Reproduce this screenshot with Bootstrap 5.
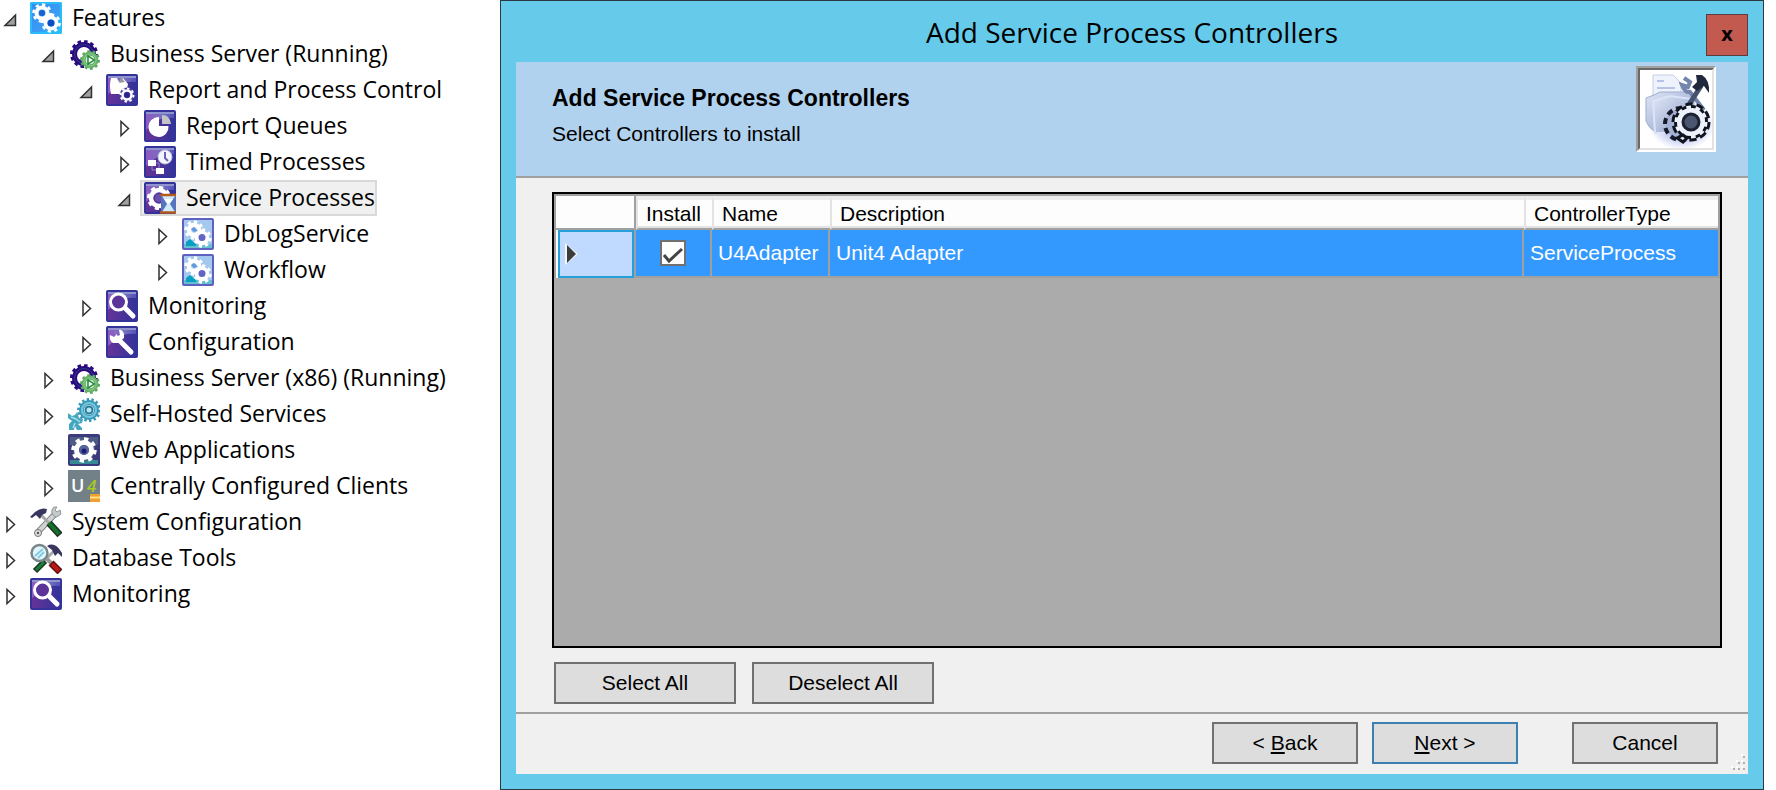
<!DOCTYPE html>
<html lang="en">
<head>
<meta charset="utf-8">
<meta name="viewport" content="width=device-width, initial-scale=1">
<title>Add Service Process Controllers</title>
<link href="https://cdn.jsdelivr.net/npm/bootstrap@5.3.0/dist/css/bootstrap.min.css" rel="stylesheet">
<style>
  body { background: #fff; color: #000; font-family: "Liberation Sans", Arial, sans-serif; font-size: 21px; line-height: 24px; }

  /* feature tree */
  .tree { flex: 0 0 500px; font-family: "Open Sans", "Segoe UI", sans-serif; font-size: 23px; }
  .tree ul ul { padding-left: 38px; }
  .tree-row { height: 36px; }
  .twisty { width: 26px; height: 36px; padding: 0; border: 0; background: none; }
  .twisty svg { display: block; width: 26px; height: 36px; }
  .tree-link { height: 36px; padding: 0 0 0 2px; gap: 10px; border: 2px solid transparent; color: #000; text-decoration: none; white-space: nowrap; }
  .tree-link svg { width: 32px; height: 32px; flex: none; }
  .tree-link span { padding-bottom: 2px; }
  .tree-link.selected { background: #f0f0f0; border-color: #d9d9d9; }

  /* wizard window */
  .wizard { background: #66cbea; border: 1px solid #2b3a42; padding: 0 15px 15px; margin-right: 12px; }
  .title-bar { height: 61px; font-family: "Open Sans", "Segoe UI", sans-serif; font-size: 28px; line-height: 36px; }
  .close-btn { right: 0; top: 13px; width: 42px; height: 42px; padding: 0 0 2px; border: 1px solid #5b3c40; background: #c25a50; color: #000; font: bold 20px/24px "Open Sans", sans-serif; }
  .banner { background: #b1d2ee; border-bottom: 2px solid #a0a0a0; height: 116px; padding: 4px 32px 0 36px; }
  .banner h1 { font-size: 23px; line-height: 36px; font-weight: bold; }
  .banner p { line-height: 36px; }
  .banner-copy { padding-top: 14px; }
  .banner-pic { width: 80px; height: 86px; border: 2px solid; border-color: #a0a0a0 #fff #fff #a0a0a0; }
  .banner-pic svg { display: block; width: 76px; height: 82px; background: #fff; border: 2px solid; border-color: #696969 #e3e3e3 #e3e3e3 #696969; }
  .pane { background: #f0f0f0; }
  .pane-main { padding: 14px 26px 8px 36px; }
  .grid-box { border: 2px solid #000; background: #ababab; }
  .grid-table { width: 100%; table-layout: fixed; border-collapse: separate; border-spacing: 0; border: 2px solid #a0a0a0; border-bottom: 0; }
  .grid-table th { height: 34px; padding: 0 8px; font-weight: normal; background: #fdfdfd; border: 2px solid #e3e3e3; border-top: 4px solid #ececec; border-right: 0; border-bottom: 2px solid #a0a0a0; box-shadow: inset 0 -2px #e3e3e3; }
  .grid-table th.corner { border: 0; border-right: 2px solid #a0a0a0; border-bottom: 2px solid #a0a0a0; box-shadow: none; }
  .grid-table td { height: 48px; padding: 0 6px; background: #39f; color: #fff; white-space: nowrap; border-right: 2px solid #a0a0a0; border-bottom: 2px solid #a0a0a0; }
  .grid-table td:last-child { border-right: 0; }
  .grid-table td.row-head { padding: 0 0 0 2px; background: #fff; border-bottom: 0; }
  .row-mark { height: 48px; background: #bfd9ff; border: 2px solid #26a0da; padding-left: 4px; }
  .col-mark { width: 80px; } .col-install { width: 76px; } .col-name { width: 118px; } .col-type { width: 194px; }
  .tick { appearance: none; display: block; width: 26px; height: 26px; margin: 0 auto; border: 2px solid #707070; background: #fff; }
  .tick:checked { background: #fff url("data:image/svg+xml,%3Csvg xmlns='http://www.w3.org/2000/svg' viewBox='0 0 22 22'%3E%3Cpath d='M2 13l5 6L20 7' fill='none' stroke='%23444' stroke-width='3'/%3E%3C/svg%3E"); }
  .picks { padding: 14px 0 0 2px; }
  .win-btn { height: 42px; padding: 0; border: 2px solid #707070; background: #ddd; color: #000; }
  .win-btn.default { border-color: #3c7fb1; }
  .w-pick { width: 182px; } .w-nav { width: 146px; }
  .pane-foot { border-top: 2px solid #a0a0a0; padding: 8px 30px 10px; }
  .gap-nav { gap: 14px; }
  .cancel-gap { margin-left: 40px; }
  .grip { right: 3px; bottom: 3px; width: 15px; height: 17px; }
</style>
</head>
<body>
<svg class="position-absolute" width="0" height="0" aria-hidden="true">
  <defs>
    <linearGradient id="g-violet" x1="0" y1="0" x2="1" y2="0"><stop offset="0" stop-color="#663399"/><stop offset=".55" stop-color="#4a3399"/><stop offset="1" stop-color="#333399"/></linearGradient>
    <linearGradient id="g-shine" x1="0" y1="0" x2="1" y2="0"><stop offset="0" stop-color="#9a63cc"/><stop offset=".6" stop-color="#8080c8"/><stop offset="1" stop-color="#5a5ac0"/></linearGradient>
    <linearGradient id="g-blue" x1="0" y1="0" x2="1" y2="1"><stop offset="0" stop-color="#2f8df0"/><stop offset=".6" stop-color="#3c9cf4"/><stop offset="1" stop-color="#20c8fa"/></linearGradient>
    <linearGradient id="g-folder" x1="0" y1="0" x2="1" y2="1"><stop offset="0" stop-color="#dfe6f6"/><stop offset="1" stop-color="#8c9cc6"/></linearGradient>
    <radialGradient id="g-glow"><stop offset=".5" stop-color="#a9b6ec"/><stop offset="1" stop-color="#fff"/></radialGradient>
  </defs>
  <symbol id="open" viewBox="0 0 26 36"><path d="M5 25.500H15.500V15z" fill="#a0a0a0" stroke="#303030" stroke-width="1.500"/></symbol>
  <symbol id="shut" viewBox="0 0 26 36"><path d="M7 13.500v14l7.500-7z" fill="#fff" stroke="#303030" stroke-width="1.500"/></symbol>
  <symbol id="tile" viewBox="0 0 32 32"><rect width="32" height="32" rx="2" fill="#333399"/><rect x="2" y="2" width="28" height="28" fill="url(#g-violet)"/><path d="M2 2h28v6Q18 7 12 12T2 20z" fill="url(#g-shine)" opacity=".8"/><path d="M2 3h28" stroke="#8f94cf" stroke-width="2"/></symbol>
  <symbol id="features" viewBox="0 0 32 32"><rect width="32" height="32" rx="2" fill="url(#g-blue)"/><rect x="1" y="1" width="30" height="30" rx="1" fill="none" stroke="#28bcf8" stroke-width="2"/>
    <g fill="none" stroke="#fff"><circle cx="12" cy="11" r="5.500" stroke-width="4"/><circle cx="12" cy="11" r="8.500" stroke-width="2.500" pathLength="16" stroke-dasharray="1 1"/><circle cx="21" cy="21" r="5.500" stroke-width="4"/><circle cx="21" cy="21" r="8.500" stroke-width="2.500" pathLength="16" stroke-dasharray="1 1"/></g><circle cx="12" cy="11" r="3" fill="#1b62cc"/><circle cx="21" cy="21" r="3.500" fill="#0a4fc4"/></symbol>
  <symbol id="server" viewBox="0 0 32 32"><g fill="none" stroke="#2a0a80"><circle cx="16" cy="16" r="9.500" stroke-width="5"/><circle cx="16" cy="16" r="12.500" stroke-width="3" pathLength="24" stroke-dasharray="1.100 .9"/></g><circle cx="16" cy="16" r="9.500" fill="none" stroke="#2c4080" stroke-width="1"/><circle cx="22" cy="22" r="7.500" fill="#8fcb92" stroke="#68b26c" stroke-width="2"/><circle cx="22" cy="22" r="9" fill="none" stroke="#5aa860" stroke-width="2" pathLength="20" stroke-dasharray="1 1"/><circle cx="22" cy="22" r="5" fill="#d6efd2" stroke="#4e9e58"/><path d="M20 18v8l6-4z" fill="#fff" stroke="#1c8a35" stroke-width="1.500"/></symbol>
  <symbol id="report" viewBox="0 0 32 32"><use href="#tile"/><path d="M5 4h6l2 4 4-4 5 6-2 9-4 1H5q-2-8 0-16z" fill="#fff"/><path d="M15 3l-2 6 6-1z" fill="#999"/><circle cx="21" cy="21" r="7.500" fill="#4a3aa0"/><g fill="none" stroke="#fff"><circle cx="21" cy="21" r="4.500" stroke-width="2.500"/><circle cx="21" cy="21" r="6.500" stroke-width="2" pathLength="16" stroke-dasharray="1 1"/></g><circle cx="21" cy="21" r="2.500" fill="#25258c"/></symbol>
  <symbol id="pie" viewBox="0 0 32 32"><use href="#tile"/><path d="M15 7v9h9.500A10 10 0 1 1 15 7z" fill="#fff"/><path d="M18 5q8 0 9 9h-9z" fill="#c4c4c8"/></symbol>
  <symbol id="timed" viewBox="0 0 32 32"><use href="#tile"/><circle cx="21" cy="11" r="7" fill="#f4f4ff" stroke="#c0c0e0"/><path d="M21 6v6l3 3" fill="none" stroke="#6a62b8" stroke-width="2"/><path d="M4 14h8v6H4z" fill="#fff"/><path d="M8 20v4h4M12 17h3v5" fill="none" stroke="#9a80cc"/><path d="M12 22h8v6h-8z" fill="#fff"/></symbol>
  <symbol id="service" viewBox="0 0 32 32"><use href="#tile"/><g fill="none" stroke="#fff"><circle cx="15" cy="16" r="8" stroke-width="4.500"/><circle cx="15" cy="16" r="10.800" stroke-width="2.500" pathLength="16" stroke-dasharray="1 1"/></g><circle cx="15" cy="16" r="4" fill="#6a4fb0"/><path d="M17 13h15v18H17z" fill="#5873bd"/><path d="M18 14h13l-5 8 5 8H18l5-8z" fill="#cfeafa"/><path d="M20 17h9l-5 5z" fill="#fff"/><path d="M16 13h16M16 30.500h16" stroke="#b35a1c" stroke-width="2.500"/></symbol>
  <symbol id="gears" viewBox="0 0 32 32"><rect x="1" y="1" width="30" height="30" rx="1" fill="#a5c8ee" stroke="#6060c0" stroke-width="2"/><path d="M2 26h28v4H2z" fill="#65bfd0"/><g fill="none" stroke="#fff"><circle cx="12" cy="12" r="5" stroke-width="4.500"/><circle cx="12" cy="12" r="8.200" stroke-width="3" pathLength="16" stroke-dasharray="1 1"/><circle cx="20" cy="20" r="5" stroke-width="4.500"/><circle cx="20" cy="20" r="8.200" stroke-width="3" pathLength="16" stroke-dasharray="1 1"/></g><path d="M9 11l3-2 4 4-4 1z" fill="#6199dc"/><circle cx="20" cy="19.500" r="3.500" fill="#6464c4"/><path d="M4 28v-4l4-3 6 5v2z" fill="#06a0c0"/></symbol>
  <symbol id="lens" viewBox="0 0 32 32"><use href="#tile"/><path d="M19 18l8 8" stroke="#fff" stroke-width="5" stroke-linecap="round"/><circle cx="12.500" cy="12" r="8" fill="#5c3399" stroke="#fff" stroke-width="3"/></symbol>
  <symbol id="wrench" viewBox="0 0 32 32"><use href="#tile"/><path d="M13 14l12 12" stroke="#fff" stroke-width="5" stroke-linecap="round"/><path d="M9 4l1 5-2 2-4-2q-1 6 3 8h5l6-5V8q-2-5-5-4l1 5-2 1-2-2z" fill="#fff"/></symbol>
  <symbol id="hosted" viewBox="0 0 32 32"><g fill="none" stroke="#3a98b8"><circle cx="21" cy="12" r="7.500" stroke-width="5"/><circle cx="21" cy="12" r="10.500" stroke-width="3" pathLength="28" stroke-dasharray="1 1"/></g><circle cx="21" cy="12" r="7" fill="none" stroke="#74c8dc" stroke-width="2"/><circle cx="21" cy="12" r="3.500" fill="#b6e6f2" stroke="#267898" stroke-width="2"/><path d="M0 15l4 3 3-1 2-3 2 6 4 1-1 4-4 1 4 4v2h-5l-2-4-1 4H1v-6l3-3-4-3z" fill="#45a6c0"/><path d="M3 19l5 2 4 3M5 30l2-5" fill="none" stroke="#a5dfe8" stroke-width="1.500"/></symbol>
  <symbol id="web" viewBox="0 0 32 32"><rect width="32" height="32" rx="2" fill="#3a3a7c"/><path d="M2 3h28v8H2z" fill="#4c5c82"/><path d="M2 26h28v4H2z" fill="#368a94"/><circle cx="16" cy="16" r="11" fill="#52638c"/><g fill="none" stroke="#fff"><circle cx="16" cy="16" r="7.500" stroke-width="5"/><circle cx="16" cy="16" r="11" stroke-width="3.500" pathLength="16" stroke-dasharray="1 1"/></g><circle cx="16" cy="16" r="5" fill="#54669c"/><circle cx="16" cy="17" r="2.500" fill="#201e78"/></symbol>
  <symbol id="u4" viewBox="0 0 32 32"><rect width="32" height="32" fill="#728087"/><text x="3" y="22" font-family="Open Sans, sans-serif" font-size="18" font-weight="600" fill="#fff">U</text><text x="19" y="22" font-family="Open Sans, sans-serif" font-size="17" font-weight="600" font-style="italic" fill="#a9c926">4</text><path d="M22 24h10v8H22z" fill="#f0a030"/><path d="M22 27.500h10" stroke="#ffdf7c" stroke-width="2"/></symbol>
  <symbol id="hammer" viewBox="0 0 32 32"><path d="M7 27L26 7" stroke="#777" stroke-width="6"/><path d="M7 27L26 7" stroke="#d0d3d3" stroke-width="4"/><path d="M24 1q-4 4-1 8t8-1l-1-4-3 2-2-2 2-3z" fill="#c4caca" stroke="#92999b"/><circle cx="8" cy="27" r="3.500" fill="#ddd" stroke="#777"/><circle cx="8" cy="27" r="1.200" fill="#555"/><path d="M11 9l9 9" stroke="#a8a8a8" stroke-width="3"/><path d="M19 17l11 12" stroke="#252e28" stroke-width="7"/><path d="M19 17l10 11" stroke="#117328" stroke-width="4"/><path d="M0 11l5-5q6-5 12-3l-1 4-4 2-2 4-4-4-4 3z" fill="#38365e"/></symbol>
  <symbol id="dbtools" viewBox="0 0 32 32"><path d="M13 20L25 8" stroke="#aaa" stroke-width="3"/><path d="M5 29l10-10" stroke="#1e3524" stroke-width="6"/><path d="M6 28l8-8" stroke="#158034" stroke-width="3"/><path d="M17 17l6 6" stroke="#999" stroke-width="4"/><path d="M21 21l9 9" stroke="#601111" stroke-width="7"/><path d="M22 22l7 7" stroke="#bb1717" stroke-width="4"/><circle cx="9.500" cy="11" r="8" fill="#dff6fc" stroke="#78858a" stroke-width="2.500"/><path d="M5 14l8-7M8 16l6-6" stroke="#82cbe2" stroke-width="2"/><path d="M17 4q8-5 15 7v4l-4-4-3 3-3-6z" fill="#38365e"/></symbol>
  <symbol id="setup" viewBox="0 0 72 78"><ellipse cx="42" cy="55" rx="33" ry="25" fill="url(#g-glow)" opacity=".8"/><path d="M13 5h20l8 8v22H13z" fill="#eef2fc" stroke="#c4cee6"/><path d="M17 11h7M17 18h18M17 24h20" stroke="#b7c3e2" stroke-width="2"/><path d="M6 28l8-3 6-3h26l8 5v34H14q-6-4-8-10z" fill="url(#g-folder)" stroke="#9eacce"/><path d="M13 31l17-5 22 3v34H15z" fill="url(#g-folder)" stroke="#dbe4f8" stroke-width="2"/><path d="M44 8l6 4-2 5-6-2q3 8 8 7l14 18" fill="none" stroke="#7485ac" stroke-width="4"/><path d="M61 16L48 36" stroke="#46536f" stroke-width="5"/><path d="M56 5l6 0q8 5 7 18l-5-7-7 5-5-4 5-5z" fill="#20283c"/>
    <g fill="none"><circle cx="41" cy="54" r="12" stroke="#a5b2d4" stroke-width="7"/><circle cx="41" cy="54" r="16" stroke="#151b2a" stroke-width="4" pathLength="20" stroke-dasharray="1.200 .8"/><circle cx="51" cy="52" r="17" stroke="#10141e" stroke-width="5" pathLength="20" stroke-dasharray="1.300 .7"/><circle cx="51" cy="52" r="15.500" stroke="#10141e" stroke-width="3"/><circle cx="51" cy="52" r="15" stroke="#eef2fc" stroke-width="3" pathLength="20" stroke-dasharray="1 1"/><circle cx="51" cy="52" r="11" stroke="#eef2fc" stroke-width="6"/></g><circle cx="51" cy="52" r="8" fill="#4a5670" stroke="#1c2232" stroke-width="3"/><path d="M37 68l6-3 4 3-4 4z" fill="#dfe6f8" stroke="#10141e" stroke-width="3"/></symbol>
</svg>

<div class="d-flex min-vh-100">
  <nav class="tree" aria-label="Features">
    <ul class="list-unstyled mb-0">
      <li><div class="tree-row d-flex"><button class="twisty" type="button" aria-label="Collapse Features"><svg><use href="#open"/></svg></button><a class="tree-link d-flex align-items-center" href="#"><svg><use href="#features"/></svg><span>Features</span></a></div>
        <ul class="list-unstyled">
          <li><div class="tree-row d-flex"><button class="twisty" type="button" aria-label="Collapse Business Server"><svg><use href="#open"/></svg></button><a class="tree-link d-flex align-items-center" href="#"><svg><use href="#server"/></svg><span>Business Server (Running)</span></a></div>
            <ul class="list-unstyled">
              <li><div class="tree-row d-flex"><button class="twisty" type="button" aria-label="Collapse Report and Process Control"><svg><use href="#open"/></svg></button><a class="tree-link d-flex align-items-center" href="#"><svg><use href="#report"/></svg><span>Report and Process Control</span></a></div>
                <ul class="list-unstyled">
                  <li class="tree-row d-flex"><button class="twisty" type="button" aria-label="Expand Report Queues"><svg><use href="#shut"/></svg></button><a class="tree-link d-flex align-items-center" href="#"><svg><use href="#pie"/></svg><span>Report Queues</span></a></li>
                  <li class="tree-row d-flex"><button class="twisty" type="button" aria-label="Expand Timed Processes"><svg><use href="#shut"/></svg></button><a class="tree-link d-flex align-items-center" href="#"><svg><use href="#timed"/></svg><span>Timed Processes</span></a></li>
                  <li><div class="tree-row d-flex"><button class="twisty" type="button" aria-label="Collapse Service Processes"><svg><use href="#open"/></svg></button><a class="tree-link selected d-flex align-items-center" href="#" aria-current="true"><svg><use href="#service"/></svg><span>Service Processes</span></a></div>
                    <ul class="list-unstyled">
                      <li class="tree-row d-flex"><button class="twisty" type="button" aria-label="Expand DbLogService"><svg><use href="#shut"/></svg></button><a class="tree-link d-flex align-items-center" href="#"><svg><use href="#gears"/></svg><span>DbLogService</span></a></li>
                      <li class="tree-row d-flex"><button class="twisty" type="button" aria-label="Expand Workflow"><svg><use href="#shut"/></svg></button><a class="tree-link d-flex align-items-center" href="#"><svg><use href="#gears"/></svg><span>Workflow</span></a></li>
                    </ul>
                  </li>
                </ul>
              </li>
              <li class="tree-row d-flex"><button class="twisty" type="button" aria-label="Expand Monitoring"><svg><use href="#shut"/></svg></button><a class="tree-link d-flex align-items-center" href="#"><svg><use href="#lens"/></svg><span>Monitoring</span></a></li>
              <li class="tree-row d-flex"><button class="twisty" type="button" aria-label="Expand Configuration"><svg><use href="#shut"/></svg></button><a class="tree-link d-flex align-items-center" href="#"><svg><use href="#wrench"/></svg><span>Configuration</span></a></li>
            </ul>
          </li>
          <li class="tree-row d-flex"><button class="twisty" type="button" aria-label="Expand Business Server (x86)"><svg><use href="#shut"/></svg></button><a class="tree-link d-flex align-items-center" href="#"><svg><use href="#server"/></svg><span>Business Server (x86) (Running)</span></a></li>
          <li class="tree-row d-flex"><button class="twisty" type="button" aria-label="Expand Self-Hosted Services"><svg><use href="#shut"/></svg></button><a class="tree-link d-flex align-items-center" href="#"><svg><use href="#hosted"/></svg><span>Self-Hosted Services</span></a></li>
          <li class="tree-row d-flex"><button class="twisty" type="button" aria-label="Expand Web Applications"><svg><use href="#shut"/></svg></button><a class="tree-link d-flex align-items-center" href="#"><svg><use href="#web"/></svg><span>Web Applications</span></a></li>
          <li class="tree-row d-flex"><button class="twisty" type="button" aria-label="Expand Centrally Configured Clients"><svg><use href="#shut"/></svg></button><a class="tree-link d-flex align-items-center" href="#"><svg><use href="#u4"/></svg><span>Centrally Configured Clients</span></a></li>
        </ul>
      </li>
      <li class="tree-row d-flex"><button class="twisty" type="button" aria-label="Expand System Configuration"><svg><use href="#shut"/></svg></button><a class="tree-link d-flex align-items-center" href="#"><svg><use href="#hammer"/></svg><span>System Configuration</span></a></li>
      <li class="tree-row d-flex"><button class="twisty" type="button" aria-label="Expand Database Tools"><svg><use href="#shut"/></svg></button><a class="tree-link d-flex align-items-center" href="#"><svg><use href="#dbtools"/></svg><span>Database Tools</span></a></li>
      <li class="tree-row d-flex"><button class="twisty" type="button" aria-label="Expand Monitoring"><svg><use href="#shut"/></svg></button><a class="tree-link d-flex align-items-center" href="#"><svg><use href="#lens"/></svg><span>Monitoring</span></a></li>
    </ul>
  </nav>

  <section class="wizard d-flex flex-column flex-grow-1" role="dialog" aria-labelledby="wizard-title">
    <header class="title-bar position-relative d-flex align-items-center justify-content-center">
      <span id="wizard-title">Add Service Process Controllers</span>
      <button class="close-btn position-absolute" type="button" aria-label="Close">x</button>
    </header>
    <div class="banner d-flex justify-content-between">
      <div class="banner-copy">
        <h1 class="mb-0">Add Service Process Controllers</h1>
        <p class="mb-0">Select Controllers to install</p>
      </div>
      <div class="banner-pic"><svg role="img" aria-label="Setup"><use href="#setup"/></svg></div>
    </div>
    <form class="pane d-flex flex-column flex-grow-1">
      <div class="pane-main d-flex flex-column flex-grow-1">
        <div class="grid-box flex-grow-1">
          <table class="grid-table">
            <colgroup><col class="col-mark"><col class="col-install"><col class="col-name"><col><col class="col-type"></colgroup>
            <thead><tr><th class="corner"></th><th scope="col">Install</th><th scope="col">Name</th><th scope="col">Description</th><th scope="col">ControllerType</th></tr></thead>
            <tbody><tr>
              <td class="row-head"><div class="row-mark d-flex align-items-center"><svg width="16" height="24" aria-hidden="true"><path d="M1 1l13 11L1 23z" fill="#f4f6fb"/><path d="M3 3l9 9-9 9z" fill="#3c3c3c"/></svg></div></td>
              <td><input class="tick" type="checkbox" checked aria-label="Install U4Adapter"></td>
              <td>U4Adapter</td><td>Unit4 Adapter</td><td>ServiceProcess</td>
            </tr></tbody>
          </table>
        </div>
        <div class="d-flex gap-3 picks">
          <button class="win-btn w-pick" type="button">Select All</button>
          <button class="win-btn w-pick" type="button">Deselect All</button>
        </div>
      </div>
      <div class="pane-foot position-relative d-flex justify-content-end gap-nav">
        <button class="win-btn w-nav" type="button">&lt; <u>B</u>ack</button>
        <button class="win-btn w-nav default" type="submit"><u>N</u>ext &gt;</button>
        <button class="win-btn w-nav cancel-gap" type="button">Cancel</button>
        <svg class="grip position-absolute" viewBox="0 0 15 17" aria-hidden="true"><path d="M11 0h2v2h-2zM6 6h2v2H6zM11 6h2v2h-2zM1 12h2v2H1zM6 12h2v2H6zM11 12h2v2h-2z" fill="#fff"/><path d="M13 2h2v2h-2zM8 8h2v2H8zM13 8h2v2h-2zM3 14h2v2H3zM8 14h2v2H8zM13 14h2v2h-2z" fill="#b0b0b0"/></svg>
      </div>
    </form>
  </section>
</div>
<script src="https://cdn.jsdelivr.net/npm/bootstrap@5.3.0/dist/js/bootstrap.bundle.min.js"></script>
</body>
</html>
